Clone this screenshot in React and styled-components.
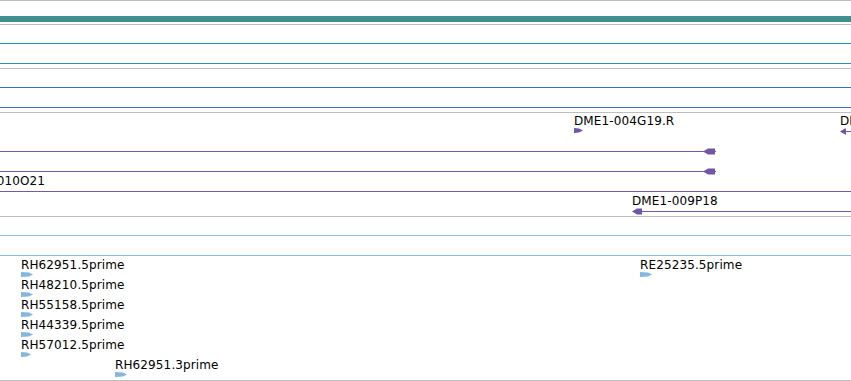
import React from 'react';
import styled, { createGlobalStyle } from 'styled-components';

const Global = createGlobalStyle`
  html, body { margin: 0; padding: 0; background: #ffffff; }
  body { font-family: "DejaVu Sans", "Liberation Sans", sans-serif; }
`;

const Panel = styled.div`
  width: 851px;
  height: 381px;
  overflow: hidden;
  display: flex;
  flex-direction: column;
  background: #ffffff;
`;

const Track = styled.section`
  display: flex;
  flex-direction: column;
  border-top: 1px solid #bebebe;
  padding-bottom: 3px;
  &:last-child { border-bottom: 1px solid #bebebe; }
`;

const Row = styled.div`
  position: relative;
  height: 20px;
`;

const Bar = styled.div`
  position: absolute;
  left: 0;
  right: 0;
  top: 15px;
  height: 6px;
  background: #3f8f8f;
`;

const Span = styled.div`
  position: absolute;
  top: 18px;
  height: 1px;
  left: ${p => p.$from}px;
  ${p => (p.$to == null ? 'right: 0;' : `width: ${p.$to - p.$from}px;`)}
  background: ${p => p.$color};
`;

const Label = styled.span`
  position: absolute;
  top: 1px;
  left: ${p => p.$x}px;
  font-size: 12px;
  line-height: 14px;
  letter-spacing: 0.12px;
  color: #000000;
  white-space: nowrap;
`;

const GlyphSvg = styled.svg`
  position: absolute;
  top: 15px;
  left: ${p => p.$x}px;
  display: block;
  overflow: visible;
`;

const PURPLE = '#7156a6';
const PURPLE_LINE = '#705c9e';
const LIGHT = '#85b8dc';

function RightArrow({ x, w = 10, h = 5, color }) {
  const tip = w;
  const body = Math.max(w - 4, 2);
  return (
    <GlyphSvg $x={x} width={w} height={h} viewBox={`0 0 ${w} ${h}`}>
      <polygon points={`0,0 ${body},0.6 ${tip},${h / 2} ${body},${h - 0.6} 0,${h}`} fill={color} />
    </GlyphSvg>
  );
}

function LeftArrow({ x, w = 12, color }) {
  return (
    <GlyphSvg $x={x} width={w} height={7} viewBox={`0 0 ${w} 7`}>
      <polygon points={`0,3.5 5,0.5 ${w},0.5 ${w},6.5 5,6.5`} fill={color} />
    </GlyphSvg>
  );
}

const rhRows = [
  { label: 'RH62951.5prime', x: 21, w: 12, extra: { label: 'RE25235.5prime', x: 640, w: 12 } },
  { label: 'RH48210.5prime', x: 21, w: 12 },
  { label: 'RH55158.5prime', x: 21, w: 12 },
  { label: 'RH44339.5prime', x: 21, w: 12 },
  { label: 'RH57012.5prime', x: 21, w: 10 },
  { label: 'RH62951.3prime', x: 115, w: 12 },
];

export default function App() {
  return (
    <Panel>
      <Global />
      <Track>
        <Row><Bar /></Row>
      </Track>

      <Track>
        <Row><Span $from={0} $color="#2a91b3" /></Row>
        <Row><Span $from={0} $color="#2a91b3" /></Row>
      </Track>

      <Track>
        <Row><Span $from={0} $color="#3c6fc0" /></Row>
        <Row><Span $from={0} $color="#3c6fc0" /></Row>
      </Track>

      <Track>
        <Row>
          <Label $x={574}>DME1-004G19.R</Label>
          <RightArrow x={574} w={9} h={5} color={PURPLE} />
          <Label $x={840}>DME1-003F02.R</Label>
          <Span $from={844} $color={PURPLE_LINE} />
          <LeftArrow x={840} w={6} color={PURPLE} />
        </Row>
        <Row>
          <Span $from={0} $to={716} $color={PURPLE_LINE} />
          <LeftArrow x={703} w={12} color={PURPLE} />
        </Row>
        <Row>
          <Span $from={0} $to={716} $color={PURPLE_LINE} />
          <LeftArrow x={703} w={12} color={PURPLE} />
        </Row>
        <Row>
          <Label $x={-43}>DME1-010O21</Label>
          <Span $from={0} $color={PURPLE_LINE} />
        </Row>
        <Row>
          <Label $x={632}>DME1-009P18</Label>
          <Span $from={636} $color={PURPLE_LINE} />
          <LeftArrow x={632} w={10} color={PURPLE} />
        </Row>
      </Track>

      <Track>
        <Row><Span $from={0} $color="#8fbddc" /></Row>
        <Row><Span $from={0} $color="#8fbddc" /></Row>
        {rhRows.map(r => (
          <Row key={r.label}>
            <Label $x={r.x}>{r.label}</Label>
            <RightArrow x={r.x} w={r.w} h={5} color={LIGHT} />
            {r.extra && (
              <>
                <Label $x={r.extra.x}>{r.extra.label}</Label>
                <RightArrow x={r.extra.x} w={r.extra.w} h={5} color={LIGHT} />
              </>
            )}
          </Row>
        ))}
      </Track>
    </Panel>
  );
}
